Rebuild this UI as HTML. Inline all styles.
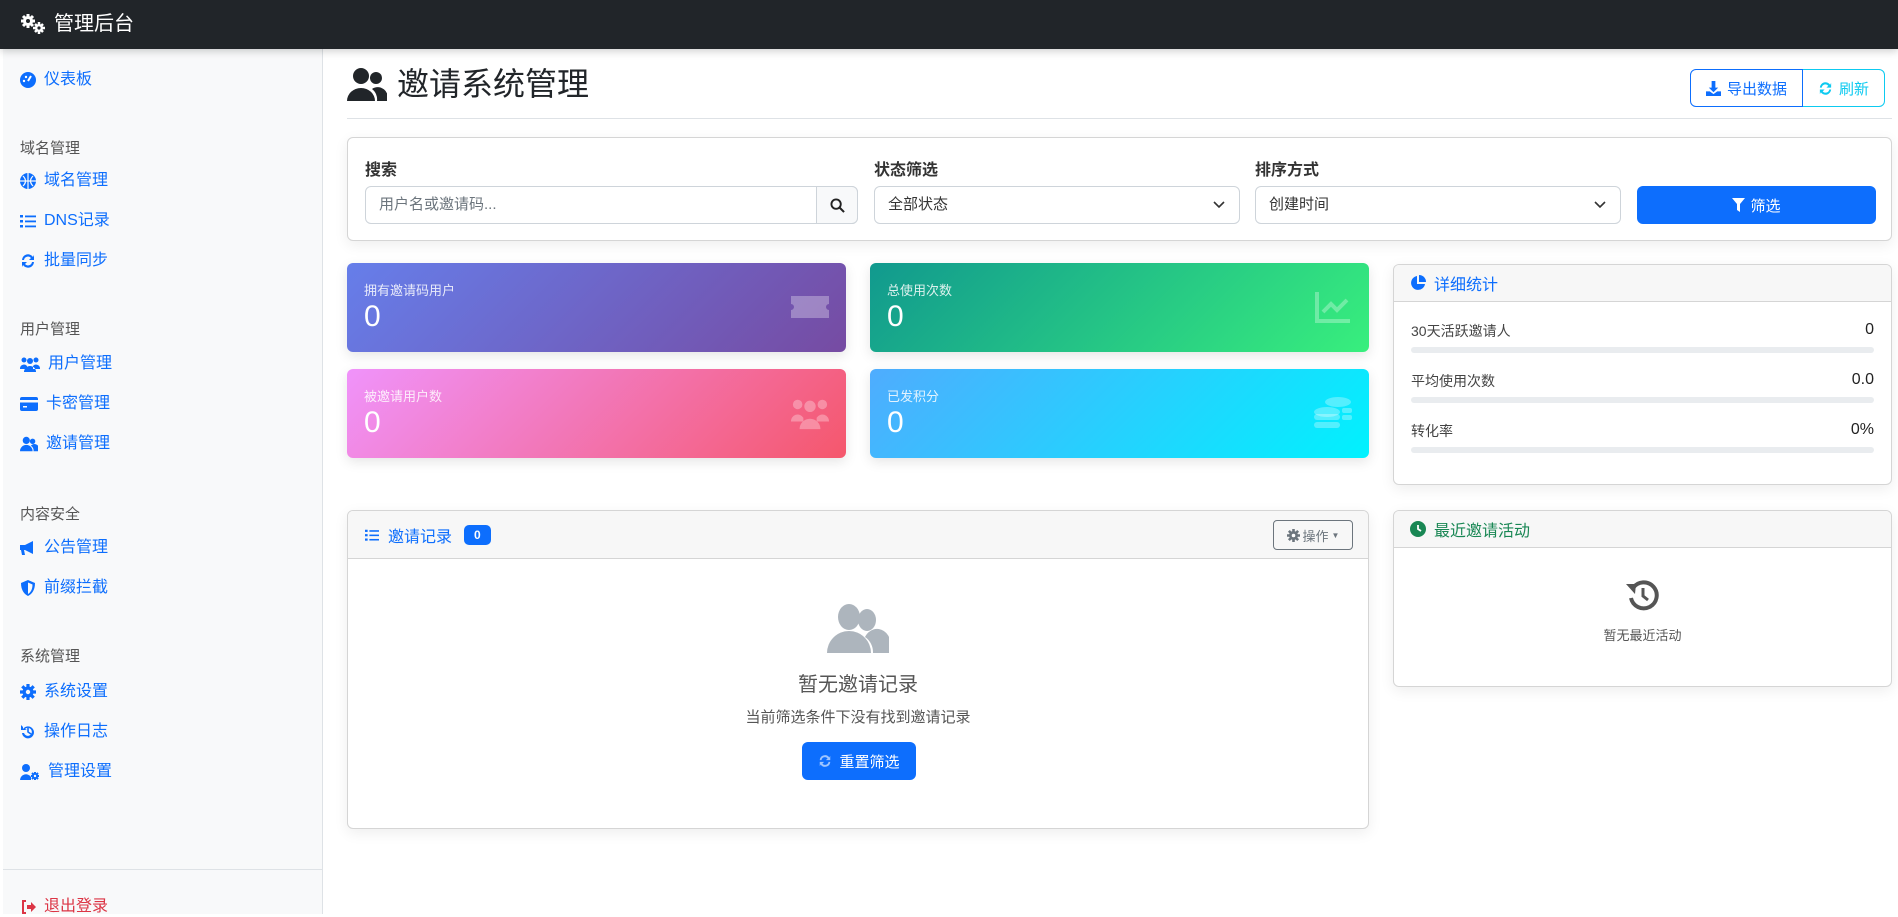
<!DOCTYPE html>
<html><head><meta charset="utf-8">
<style>
*{box-sizing:border-box;margin:0;padding:0}
body{width:1898px;height:914px;overflow:hidden;background:#fff;font-family:"Liberation Sans","Noto Sans CJK SC",sans-serif;color:#212529;position:relative}
.abs{position:absolute}
.nav{left:0;top:0;width:1898px;height:49px;background:#212529;box-shadow:0 2px 8px rgba(0,0,0,.2);z-index:2}
.brand{left:20px;top:10px;color:#fff;font-size:20px;line-height:28px}
.side{left:3px;top:49px;width:320px;height:865px;background:#f8f9fa;border-right:1px solid #dee2e6}
.si{position:absolute;left:17px;font-size:16px;color:#0d6efd;line-height:20px;display:flex;align-items:center;gap:8px}
.si svg{width:16px;height:16px;fill:#0d6efd}
.sh{position:absolute;left:17px;font-size:15px;color:#555;line-height:20px}
.card{position:absolute;background:#fff;border:1px solid #d5d5d5;border-radius:6px;box-shadow:0 4px 14px rgba(0,0,0,.07);overflow:hidden}
.chead{height:37px;background:#f7f7f7;border-bottom:1px solid #d5d5d5;display:flex;align-items:center;padding-left:16px;font-size:16px;color:#0d6efd;gap:8px}
.lbl{position:absolute;font-size:16px;font-weight:bold;color:#333}
.inp{position:absolute;height:38px;border:1px solid #ced4da;border-radius:6px;font-size:15px;color:#333;line-height:36px;padding-left:13px;background:#fff}
.stat{position:absolute;border-radius:6px;color:#fff;width:499px;height:89px;box-shadow:0 4px 12px rgba(0,0,0,.1)}
.stat .t{position:absolute;left:17px;top:17px;font-size:13px;opacity:.85}
.stat .v{position:absolute;left:17px;top:37px;font-size:30px}
.stat svg{position:absolute;right:17px;top:27px;width:38px;height:34px;fill:rgba(255,255,255,.3)}
.row{position:absolute;left:17px;right:17px;font-size:14px;color:#444}
.row span{float:right;font-size:16px;color:#222}
.bar{position:absolute;left:17px;right:17px;height:6px;background:#e9ecef;border-radius:3px}
</style></head><body>
<div class="abs nav"><div class="abs brand" style="display:flex;align-items:center;gap:8px"><svg width="26" height="22" viewBox="0 0 26 22" fill="#fff"><circle cx="8" cy="8" r="5"/><circle cx="8" cy="8" r="2" fill="#212529"/><g stroke="#fff" stroke-width="3"><path d="M8 1v14M1 8h14M3 3l10 10M13 3L3 13"/></g><circle cx="8" cy="8" r="2" fill="#212529"/><circle cx="19" cy="15" r="4"/><g stroke="#fff" stroke-width="2.5"><path d="M19 9v12M13 15h12M15 11l8 8M23 11l-8 8"/></g><circle cx="19" cy="15" r="1.6" fill="#212529"/></svg>管理后台</div></div>

<div class="abs side">
<div class="si" style="top:21px"><svg viewBox="0 0 16 16"><circle cx="8" cy="8" r="8"/><path d="M8 9l3-5" stroke="#fff" stroke-width="2"/><circle cx="4" cy="9" r="1.2" fill="#fff"/><circle cx="6" cy="5" r="1.2" fill="#fff"/></svg>仪表板</div>
<div class="sh" style="top:90px">域名管理</div>
<div class="si" style="top:122px"><svg viewBox="0 0 16 16"><circle cx="8" cy="8" r="8"/><path d="M0 8h16M8 0v16M3 3q5 5 0 10M13 3q-5 5 0 10" stroke="#f8f9fa" stroke-width="1.2" fill="none"/></svg>域名管理</div>
<div class="si" style="top:162px"><svg viewBox="0 0 16 16"><rect x="0" y="2" width="3" height="2.5"/><rect x="0" y="7" width="3" height="2.5"/><rect x="0" y="12" width="3" height="2.5"/><rect x="5" y="2.5" width="11" height="1.8"/><rect x="5" y="7.5" width="11" height="1.8"/><rect x="5" y="12.5" width="11" height="1.8"/></svg>DNS记录</div>
<div class="si" style="top:202px"><svg viewBox="0 0 16 16"><path d="M2 7a6 6 0 0 1 11-3l1-2v5h-5l2-2a4 4 0 0 0-7 2zM14 9a6 6 0 0 1-11 3l-1 2V9h5l-2 2a4 4 0 0 0 7-2z"/></svg>批量同步</div>
<div class="sh" style="top:271px">用户管理</div>
<div class="si" style="top:305px"><svg viewBox="0 0 20 16" style="width:20px"><circle cx="4" cy="4" r="2.5"/><circle cx="16" cy="4" r="2.5"/><circle cx="10" cy="5" r="3"/><path d="M0 12a4 4 0 0 1 7-2v3H0zM20 12a4 4 0 0 0-7-2v3h7zM4 16a6 6 0 0 1 12 0z"/></svg>用户管理</div>
<div class="si" style="top:345px"><svg viewBox="0 0 18 16" style="width:18px"><rect x="0" y="1" width="18" height="14" rx="2"/><rect x="0" y="4" width="18" height="2.5" fill="#f8f9fa"/><rect x="3" y="10" width="4" height="1.5" fill="#f8f9fa"/></svg>卡密管理</div>
<div class="si" style="top:385px"><svg viewBox="0 0 20 16" style="width:18px"><circle cx="7" cy="4" r="4"/><circle cx="14" cy="5" r="3"/><path d="M0 16a7 7 0 0 1 14 0zM15 16a6 6 0 0 0-3-6 5 5 0 0 1 8 6z"/></svg>邀请管理</div>
<div class="sh" style="top:456px">内容安全</div>
<div class="si" style="top:489px"><svg viewBox="0 0 16 16"><path d="M0 5h5l8-4v13l-8-4H4l1 5H2l-1-5H0z"/></svg>公告管理</div>
<div class="si" style="top:529px"><svg viewBox="0 0 16 16"><path d="M8 0l7 3c0 7-3 11-7 13C4 14 1 10 1 3z"/><path d="M8 2.5l4.5 2c0 5-2 8-4.5 9.5z" fill="#f8f9fa"/></svg>前缀拦截</div>
<div class="sh" style="top:598px">系统管理</div>
<div class="si" style="top:633px"><svg viewBox="0 0 16 16"><circle cx="8" cy="8" r="5.5"/><g stroke="#0d6efd" stroke-width="3.2"><path d="M8 0v16M0 8h16M2.3 2.3l11.4 11.4M13.7 2.3L2.3 13.7"/></g><circle cx="8" cy="8" r="2.2" fill="#f8f9fa"/></svg>系统设置</div>
<div class="si" style="top:673px"><svg viewBox="0 0 16 16"><path d="M3 5a6 6 0 1 1-1 4h2a4 4 0 1 0 1-4l2 1H1V1l2 2z"/><path d="M8 4v4l3 2" stroke="#0d6efd" stroke-width="1.6" fill="none"/></svg>操作日志</div>
<div class="si" style="top:713px"><svg viewBox="0 0 20 16" style="width:20px"><circle cx="6" cy="4" r="4"/><path d="M0 16a6 6 0 0 1 11-3v3z"/><circle cx="15" cy="12" r="3"/><g stroke="#0d6efd" stroke-width="2"><path d="M15 8v8M11 12h8M12 9l6 6M18 9l-6 6"/></g><circle cx="15" cy="12" r="1.2" fill="#f8f9fa"/></svg>管理设置</div>
<div class="abs" style="left:0;top:820px;width:319px;border-top:1px solid #dee2e6"></div>
<div class="si" style="top:848px;color:#dc3545"><svg viewBox="0 0 16 16" style="fill:#dc3545"><path d="M6 1H2v14h4v-2H4V3h2z"/><path d="M7 6h4V3l5 5-5 5v-3H7z"/></svg>退出登录</div>
</div>

<div class="abs" style="left:347px;top:64px;display:flex;align-items:center;gap:10px;font-size:32px;line-height:40px;color:#212529"><svg width="40" height="34" viewBox="0 0 40 34" fill="#212529"><circle cx="14" cy="9" r="8"/><circle cx="29" cy="11" r="6"/><path d="M0 34a14 13 0 0 1 28 0zM30 34a13 13 0 0 0-5-12 10 10 0 0 1 15 12z"/></svg>邀请系统管理</div>
<div class="abs" style="left:1690px;top:69px;width:195px;height:38px;display:flex;font-size:15px">
<div style="width:113px;border:1px solid #0d6efd;border-radius:6px 0 0 6px;color:#0d6efd;display:flex;align-items:center;justify-content:center;gap:6px"><svg width="15" height="15" viewBox="0 0 16 16" fill="#0d6efd"><path d="M6 0h4v7h3l-5 5-5-5h3z"/><path d="M0 11h4l4 3 4-3h4v5H0z"/></svg>导出数据</div>
<div style="width:82px;border:1px solid #0dcaf0;border-left:none;border-radius:0 6px 6px 0;color:#0dcaf0;display:flex;align-items:center;justify-content:center;gap:6px"><svg width="15" height="15" viewBox="0 0 16 16" fill="#0dcaf0"><path d="M2 7a6 6 0 0 1 11-3l1-2v5h-5l2-2a4 4 0 0 0-7 2zM14 9a6 6 0 0 1-11 3l-1 2V9h5l-2 2a4 4 0 0 0 7-2z"/></svg>刷新</div></div>
<div class="abs" style="left:347px;top:118px;width:1545px;border-top:1px solid #dee2e6"></div>

<div class="card" style="left:347px;top:137px;width:1545px;height:104px">
<div class="lbl" style="left:17px;top:18px">搜索</div>
<div class="lbl" style="left:526px;top:18px">状态筛选</div>
<div class="lbl" style="left:907px;top:18px">排序方式</div>
<div class="inp" style="left:17px;top:48px;width:493px;color:#6c757d">用户名或邀请码...</div>
<div class="abs" style="left:468px;top:48px;width:42px;height:38px;border:1px solid #ced4da;border-radius:0 6px 6px 0;background:#f8f9fa;display:flex;align-items:center;justify-content:center"><svg width="15" height="15" viewBox="0 0 16 16"><circle cx="6.5" cy="6.5" r="5" stroke="#222" stroke-width="2" fill="none"/><path d="M10 10l5 5" stroke="#222" stroke-width="2.2"/></svg></div>
<div class="inp" style="left:526px;top:48px;width:366px">全部状态<svg class="abs" style="right:14px;top:14px" width="12" height="8" viewBox="0 0 12 8"><path d="M1 1l5 5 5-5" stroke="#333" stroke-width="1.6" fill="none"/></svg></div>
<div class="inp" style="left:907px;top:48px;width:366px">创建时间<svg class="abs" style="right:14px;top:14px" width="12" height="8" viewBox="0 0 12 8"><path d="M1 1l5 5 5-5" stroke="#333" stroke-width="1.6" fill="none"/></svg></div>
<div class="abs" style="left:1289px;top:48px;width:239px;height:38px;background:#0d6efd;border-radius:6px;color:#fff;font-size:15px;display:flex;align-items:center;justify-content:center;gap:5px"><svg width="13" height="14" viewBox="0 0 13 14" fill="#fff"><path d="M0 0h13L8 6v8L5 12V6z"/></svg>筛选</div>
</div>

<div class="stat" style="left:347px;top:263px;background:linear-gradient(135deg,#667eea,#764ba2)"><div class="t">拥有邀请码用户</div><div class="v">0</div><svg viewBox="0 0 38 34"><path d="M0 6h38v8a3 3 0 0 0 0 6v8H0v-8a3 3 0 0 0 0-6z"/></svg></div>
<div class="stat" style="left:870px;top:263px;background:linear-gradient(135deg,#11998e,#38ef7d)"><div class="t">总使用次数</div><div class="v">0</div><svg viewBox="0 0 38 34" style="fill:none;stroke:rgba(255,255,255,.3);stroke-width:4"><path d="M3 2v29h33M9 22l8-8 6 6 10-10"/></svg></div>
<div class="stat" style="left:347px;top:369px;background:linear-gradient(135deg,#f093fb,#f5576c)"><div class="t">被邀请用户数</div><div class="v">0</div><svg viewBox="0 0 40 34"><circle cx="7" cy="8" r="5"/><circle cx="33" cy="8" r="5"/><circle cx="20" cy="10" r="6"/><path d="M0 26a7 7 0 0 1 13-4v4zM40 26a7 7 0 0 0-13-4v4zM9 34a11 11 0 0 1 22 0z"/></svg></div>
<div class="stat" style="left:870px;top:369px;background:linear-gradient(135deg,#4facfe,#00f2fe)"><div class="t">已发积分</div><div class="v">0</div><svg viewBox="0 0 38 34"><ellipse cx="24" cy="6" rx="13" ry="5"/><ellipse cx="13" cy="16" rx="13" ry="5"/><rect x="0" y="18" width="26" height="6" rx="3"/><rect x="0" y="26" width="26" height="6" rx="3"/><rect x="28" y="12" width="10" height="5" rx="2"/><rect x="28" y="19" width="10" height="5" rx="2"/></svg></div>

<div class="card" style="left:1393px;top:264px;width:499px;height:221px">
<div class="chead"><svg width="16" height="16" viewBox="0 0 16 16" fill="#0d6efd"><path d="M7 1a7 7 0 1 0 8 8H7z"/><path d="M9 0a7 7 0 0 1 7 7H9z"/></svg>详细统计</div>
<div class="row" style="top:56px">30天活跃邀请人<span>0</span></div><div class="bar" style="top:82px"></div>
<div class="row" style="top:106px">平均使用次数<span>0.0</span></div><div class="bar" style="top:132px"></div>
<div class="row" style="top:156px">转化率<span>0%</span></div><div class="bar" style="top:182px"></div>
</div>

<div class="card" style="left:347px;top:510px;width:1022px;height:319px">
<div class="chead" style="height:48px"><svg width="16" height="14" viewBox="0 0 16 16" fill="#0d6efd"><rect x="0" y="2" width="3" height="2.5"/><rect x="0" y="7" width="3" height="2.5"/><rect x="0" y="12" width="3" height="2.5"/><rect x="5" y="2.5" width="11" height="1.8"/><rect x="5" y="7.5" width="11" height="1.8"/><rect x="5" y="12.5" width="11" height="1.8"/></svg>邀请记录<span style="margin-left:4px;background:#0d6efd;color:#fff;font-size:12px;font-weight:bold;border-radius:5px;padding:3px 10px">0</span></div>
<div class="abs" style="right:15px;top:9px;width:80px;height:30px;border:1px solid #6c757d;border-radius:4px;font-size:13px;color:#6c757d;display:flex;align-items:center;justify-content:center;gap:3px"><svg width="13" height="13" viewBox="0 0 16 16" fill="#6c757d"><circle cx="8" cy="8" r="5.5"/><g stroke="#6c757d" stroke-width="3.2"><path d="M8 0v16M0 8h16M2.3 2.3l11.4 11.4M13.7 2.3L2.3 13.7"/></g><circle cx="8" cy="8" r="2.2" fill="#fff"/></svg>操作 <span style="font-size:8px">▼</span></div>
<div class="abs" style="left:0;width:100%;top:92px;text-align:center"><svg width="62" height="50" viewBox="0 0 62 50" fill="#adb5bd"><ellipse cx="22" cy="14" rx="11" ry="13"/><ellipse cx="40" cy="17" rx="9" ry="11"/><path d="M0 50a22 22 0 0 1 44 0z"/><path d="M46 50a17 18 0 0 0-8-16 12 14 0 0 1 24 16z"/></svg></div>
<div class="abs" style="left:0;width:100%;top:157px;text-align:center;font-size:20px;color:#555">暂无邀请记录</div>
<div class="abs" style="left:0;width:100%;top:195px;text-align:center;font-size:15px;color:#555">当前筛选条件下没有找到邀请记录</div>
<div class="abs" style="left:454px;top:231px;width:114px;height:38px;background:#0d6efd;border-radius:6px;color:#fff;font-size:15px;display:flex;align-items:center;justify-content:center;gap:7px"><svg width="14" height="14" viewBox="0 0 16 16" fill="rgba(255,255,255,.6)"><path d="M2 7a6 6 0 0 1 11-3l1-2v5h-5l2-2a4 4 0 0 0-7 2zM14 9a6 6 0 0 1-11 3l-1 2V9h5l-2 2a4 4 0 0 0 7-2z"/></svg>重置筛选</div>
</div>

<div class="card" style="left:1393px;top:510px;width:499px;height:177px">
<div class="chead" style="color:#198754"><svg width="16" height="16" viewBox="0 0 16 16"><circle cx="8" cy="8" r="8" fill="#198754"/><path d="M8 4v4l3 2" stroke="#fff" stroke-width="1.8" fill="none"/></svg>最近邀请活动</div>
<div class="abs" style="left:0;width:100%;top:67px;text-align:center"><svg width="34" height="34" viewBox="0 0 34 34"><path d="M7 10A13 13 0 1 1 5 20" stroke="#555" stroke-width="4" fill="none"/><path d="M0 6l10 0 -1 10z" fill="#555"/><path d="M17 10v8l5 4" stroke="#555" stroke-width="3" fill="none"/></svg></div>
<div class="abs" style="left:0;width:100%;top:114px;text-align:center;font-size:13px;color:#555">暂无最近活动</div>
</div>
</body></html>
